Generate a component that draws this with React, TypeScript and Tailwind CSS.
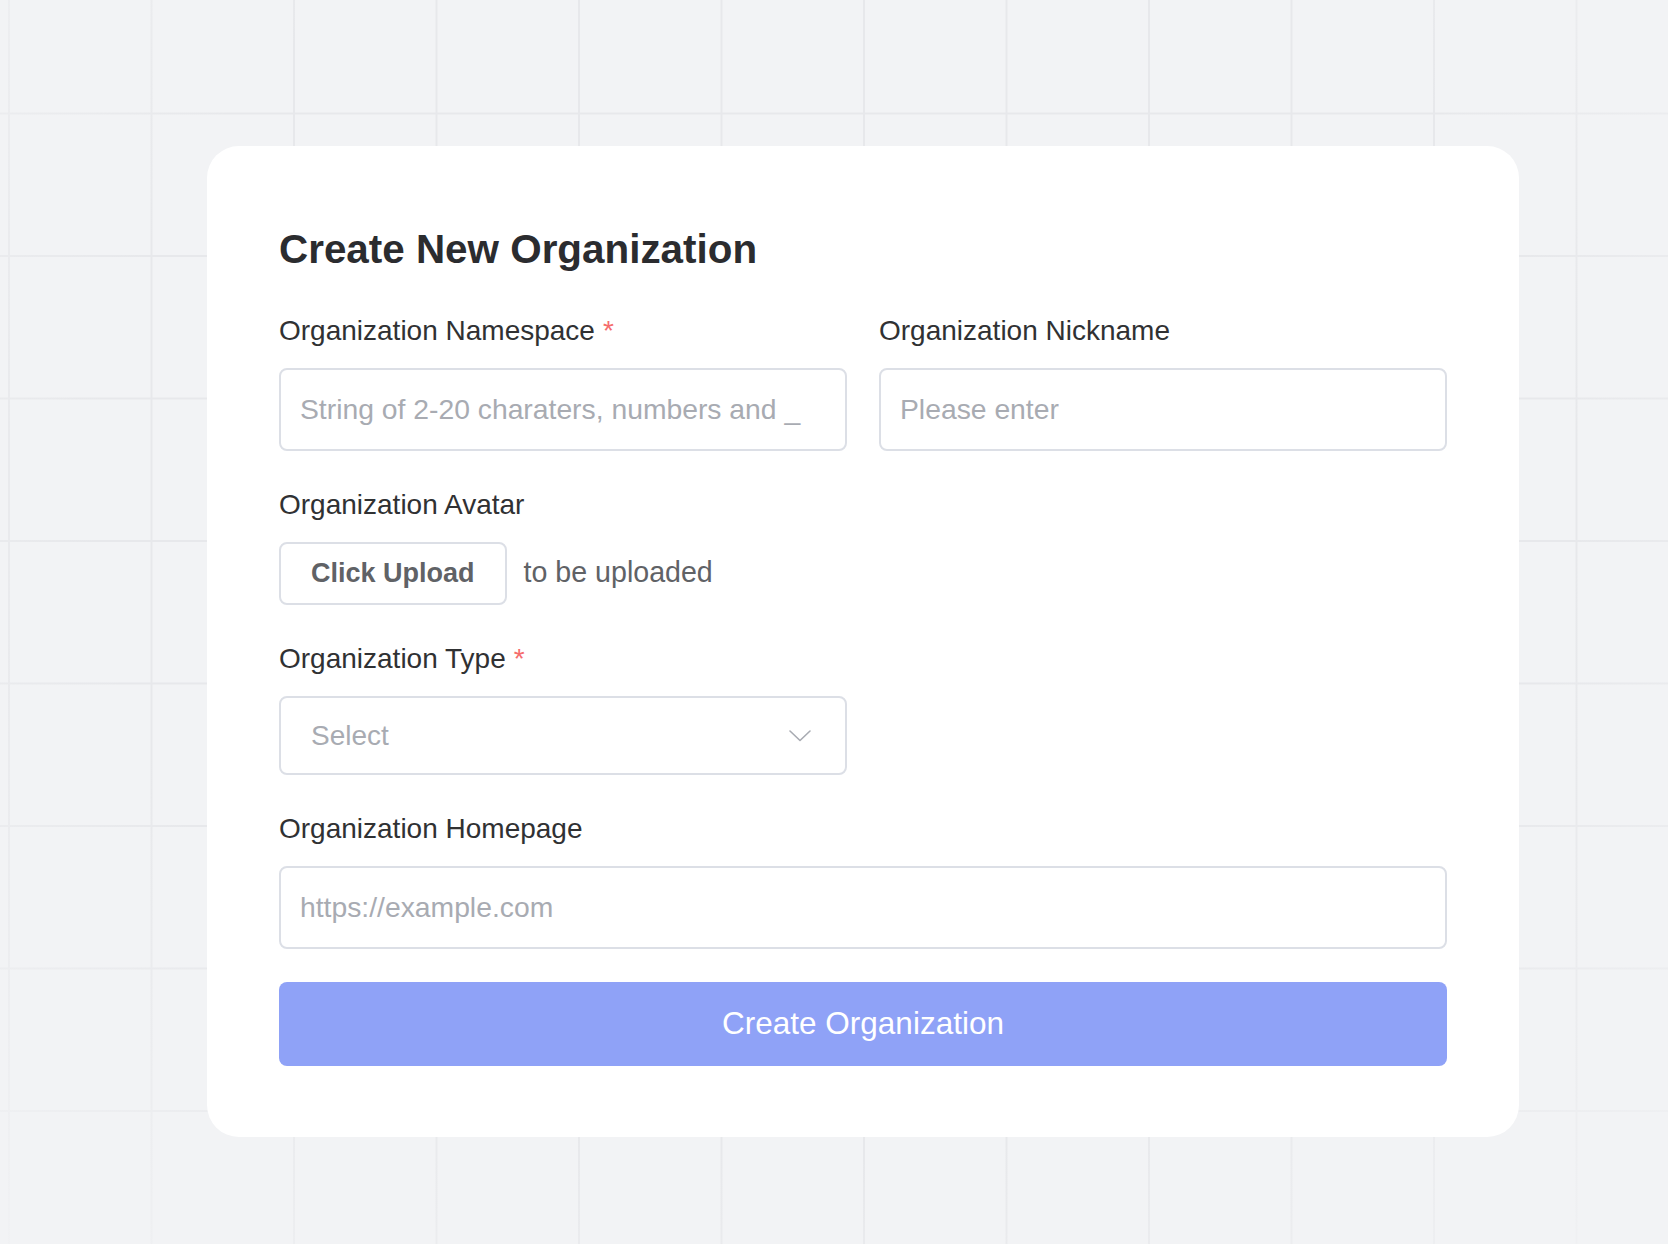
function Label({ text, required }: { text: string; required?: boolean }) {
  return (
    <div className="mb-[17px] flex items-start text-[28px] leading-[40px] text-[#303133]">
      <span>{text}</span>
      {required && <span className="ml-[8px] text-[#f56c6c]">*</span>}
    </div>
  )
}

function TextInput({ placeholder }: { placeholder: string }) {
  return (
    <input
      type="text"
      placeholder={placeholder}
      className="block h-[83px] w-full rounded-[8px] border-2 border-[#dcdfe6] bg-white pl-[19px] pr-[20px] text-[28.3px] text-[#303133] outline-none placeholder:text-[#a8abb2]"
    />
  )
}

export default function App() {
  return (
    <div className="min-h-screen w-full bg-[#f2f3f5] bg-[radial-gradient(ellipse_at_50%_40%,transparent_62%,#f2f3f5_105%),linear-gradient(to_right,#e7e8eb_2px,transparent_2px),linear-gradient(to_bottom,#e7e8eb_2px,transparent_2px)] bg-[size:100%_100%,142.5px_142.5px,142.5px_142.5px] bg-[position:0_0,8px_-30px,8px_-30px] pl-[207px] pt-[146px] font-['Liberation_Sans',Arial,sans-serif]">
      <div className="w-[1312px] rounded-[32px] bg-white px-[72px] pb-[71px] pt-[75px]">
        <h1 className="mb-[34px] text-[40.4px] font-bold leading-[56px] text-[#2b2c2f]">Create New Organization</h1>

        {/* namespace + nickname */}
        <div className="mb-[34px] grid grid-cols-2 gap-x-[32px]">
          <div>
            <Label text="Organization Namespace" required />
            <TextInput placeholder="String of 2-20 charaters, numbers and _" />
          </div>
          <div>
            <Label text="Organization Nickname" />
            <TextInput placeholder="Please enter" />
          </div>
        </div>

        {/* avatar */}
        <div className="mb-[34px]">
          <Label text="Organization Avatar" />
          <div className="flex items-center gap-[17px]">
            <button
              type="button"
              className="h-[63px] rounded-[8px] border-2 border-[#dcdfe6] bg-white px-[30px] text-[27px] font-bold text-[#606266]"
            >
              Click Upload
            </button>
            <span className="-mt-[2px] text-[28.6px] text-[#606266]">to be uploaded</span>
          </div>
        </div>

        {/* type */}
        <div className="mb-[34px] grid grid-cols-2 gap-x-[32px]">
          <div>
            <Label text="Organization Type" required />
            <div className="flex h-[79px] w-full items-center justify-between rounded-[8px] border-2 border-[#dcdfe6] bg-white pl-[30px] pr-[34px]">
              <span className="text-[28px] text-[#a8abb2]">Select</span>
              <svg width="22" height="12" viewBox="0 0 22 12" fill="none">
                <path d="M1 1L11 10.5L21 1" stroke="#a8abb2" strokeWidth="1.6" strokeLinecap="round" strokeLinejoin="round" />
              </svg>
            </div>
          </div>
        </div>

        {/* homepage */}
        <div className="mb-[33px]">
          <Label text="Organization Homepage" />
          <TextInput placeholder="https://example.com" />
        </div>

        <button
          type="button"
          className="flex h-[84px] w-full items-center justify-center rounded-[8px] bg-[#8fa2f7] text-[31.5px] text-white"
        >
          Create Organization
        </button>
      </div>
    </div>
  )
}
